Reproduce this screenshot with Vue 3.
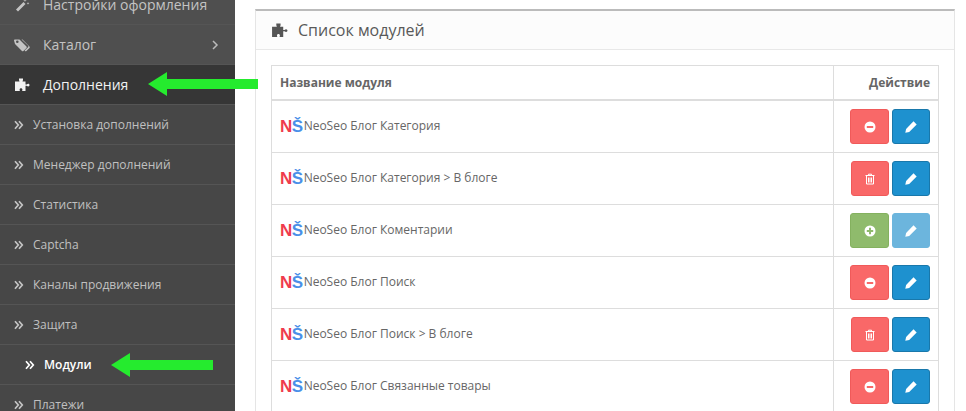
<script setup>
const puzzle = 'M5 1.5h4v1.600c0 .5-.5.8-.5 1.400h3v3h1.200c.5-.5 1-.7 1.500-.7.9 0 1.300.7 1.300 1.300s-.4 1.300-1.300 1.300c-.5 0-1-.2-1.500-.7h-1.200V14H8c.2-.5.4-.8.4-1.300 0-.8-.6-1.400-1.400-1.400s-1.400.6-1.400 1.400c0 .5.2.8.4 1.300H1V4.500h4.500C5.500 3.900 5 3.600 5 3.100z'
const sub = ['Установка дополнений', 'Менеджер дополнений', 'Статистика', 'Captcha', 'Каналы продвижения', 'Защита']
const rows = [
  { name: 'NeoSeo Блог Категория', kind: 'minus' },
  { name: 'NeoSeo Блог Категория > В блоге', kind: 'trash' },
  { name: 'NeoSeo Блог Коментарии', kind: 'plus' },
  { name: 'NeoSeo Блог Поиск', kind: 'minus' },
  { name: 'NeoSeo Блог Поиск > В блоге', kind: 'trash' },
  { name: 'NeoSeo Блог Связанные товары', kind: 'minus' },
]
</script>

<template>
  <div class="page">
    <aside class="side">
      <div class="item top">
        <svg class="ic" viewBox="0 0 16 16"><path d="M2 12.500 9.500 5l2 2L4 14.500zM11 1l.6 1.400L13 3l-1.400.6L11 5l-.6-1.400L9 3l1.400-.6zM14 5l.4 1 1 .4-1 .4-.4 1-.4-1-1-.4 1-.4z" fill="#c4c4c4"/></svg>
        <span>Настройки оформления</span>
      </div>
      <div class="item">
        <svg class="ic" viewBox="0 0 16 16">
          <path d="M0 3.500C0 3 .4 2.500 1 2.500h4.500L12.500 9.500c.4.400.4 1 0 1.400l-3.100 3.100c-.4.400-1 .4-1.400 0L1 7zM3.300 6a1.300 1.300 0 1 0 0-2.600 1.300 1.300 0 0 0 0 2.600z" fill="#c4c4c4" fill-rule="evenodd"/>
          <path d="M7.500 2.500h1L15.500 9.500c.4.400.4 1 0 1.400l-3.100 3.100c-.4.400-1 .4-1.400 0l-.4-.4 3.400-3.400c.5-.5.500-1.300 0-1.800z" fill="#c4c4c4"/>
        </svg>
        <span>Каталог</span>
        <svg class="chev" viewBox="0 0 8 12"><path d="M2 2l4 4-4 4" fill="none" stroke="#bbb" stroke-width="1.500"/></svg>
      </div>
      <div class="item active">
        <svg class="ic" viewBox="0 0 16 16"><path :d="puzzle" fill="#f2f2f2"/></svg>
        <span>Дополнения</span>
      </div>
      <div v-for="s in sub" :key="s" class="item subitem">
        <svg class="dbl" viewBox="0 0 10 10"><path d="M1 1.200l3.300 3.800L1 8.800M5 1.200l3.300 3.800L5 8.800" fill="none" stroke="#c4c4c4" stroke-width="1.700"/></svg>
        <span>{{ s }}</span>
      </div>
      <div class="item subitem deep">
        <svg class="dbl" viewBox="0 0 10 10"><path d="M1 1.200l3.300 3.800L1 8.800M5 1.200l3.300 3.800L5 8.800" fill="none" stroke="#fff" stroke-width="1.700"/></svg>
        <span>Модули</span>
      </div>
      <div class="item subitem">
        <svg class="dbl" viewBox="0 0 10 10"><path d="M1 1.200l3.300 3.800L1 8.800M5 1.200l3.300 3.800L5 8.800" fill="none" stroke="#c4c4c4" stroke-width="1.700"/></svg>
        <span>Платежи</span>
      </div>
    </aside>

    <main class="main">
      <section class="panel">
        <header class="head">
          <svg class="head-ic" viewBox="0 0 16 16"><path :d="puzzle" fill="#555"/></svg>
          <h3>Список модулей</h3>
        </header>
        <div class="body">
          <div class="table">
            <div class="tr th">
              <div class="c1">Название модуля</div>
              <div class="c2">Действие</div>
            </div>
            <div v-for="r in rows" :key="r.name" class="tr">
              <div class="c1 name">
                <span class="logo"><b class="n">N</b><b class="s">Š</b></span>
                <span class="label">{{ r.name }}</span>
              </div>
              <div class="c2 btns">
                <span class="btn" :class="r.kind === 'plus' ? 'green' : r.kind === 'trash' ? 'red narrow' : 'red'">
                  <svg v-if="r.kind === 'minus'" viewBox="0 0 12 12"><circle cx="6" cy="6" r="5.500" fill="#fff"/><rect x="2.800" y="5" width="6.400" height="2" fill="#f96868"/></svg>
                  <svg v-else-if="r.kind === 'plus'" viewBox="0 0 12 12"><circle cx="6" cy="6" r="5.500" fill="#fff"/><path d="M5 2.800h2V5h2.200v2H7v2.200H5V7H2.800V5H5z" fill="#8fbb6c"/></svg>
                  <svg v-else viewBox="0 0 12 12"><path d="M1.500 2.500h9M4.500 2.500V1.200h3v1.300M2.500 3v8h7V3M4.500 4.500v5M6 4.500v5M7.500 4.500v5" fill="none" stroke="#fff" stroke-width="1"/></svg>
                </span>
                <span class="btn blue" :class="{ faded: r.kind === 'plus' }">
                  <svg viewBox="0 0 12 12"><path d="M8.500.3l3.200 3.200-7.500 7.500-3.900.8.800-3.900z" fill="#fff"/></svg>
                </span>
              </div>
            </div>
          </div>
        </div>
      </section>
    </main>

    <svg class="arrow a1" width="111" height="26" viewBox="0 0 111 26"><path d="M0 13 19 1v7h91v10H19v7z" fill="#25eb2e"/></svg>
    <svg class="arrow a2" width="103" height="26" viewBox="0 0 103 26"><path d="M0 13 19 1v7h83v10H19v7z" fill="#25eb2e"/></svg>
  </div>
</template>

<style scoped>
.page {
  position: relative;
  display: flex;
  width: 966px;
  height: 411px;
  overflow: hidden;
  background: #fff;
  font-family: "Open Sans", sans-serif;
}
.side {
  flex: 0 0 235px;
  background: #474747;
  margin-top: -15px;
}
.item {
  display: flex;
  align-items: center;
  height: 39px;
  border-bottom: 1px solid #555;
  padding-left: 14px;
  color: #c3c3c3;
  font-size: 14px;
  background: #4f4f4f;
}
.item .ic {
  width: 16px;
  height: 16px;
  margin-right: 13px;
}
.chev {
  width: 8px;
  height: 12px;
  margin-left: auto;
  margin-right: 16px;
}
.active {
  background: #363636;
  color: #f2f2f2;
}
.subitem {
  background: #474747;
  font-size: 12px;
  color: #c0c0c0;
}
.dbl {
  width: 10px;
  height: 10px;
  margin-right: 9px;
}
.deep {
  padding-left: 25px;
  color: #fff;
  font-weight: 600;
}
.main {
  flex: 1;
  padding: 9px 11px 0 20px;
  min-width: 0;
}
.panel {
  border: 1px solid #e5e5e5;
  border-top: 2px solid #bbb;
  height: 420px;
}
.head {
  display: flex;
  align-items: center;
  height: 38px;
  padding-left: 15px;
  background: #fcfcfc;
  border-bottom: 1px solid #e8e8e8;
}
.head-ic {
  width: 17px;
  height: 17px;
  margin-right: 10px;
}
h3 {
  margin: 0;
  font-size: 16px;
  font-weight: 400;
  color: #595959;
}
.body {
  padding: 15px 15px 0;
}
.table {
  border: 1px solid #ddd;
  border-bottom: 0;
}
.tr {
  display: flex;
  height: 52px;
  border-bottom: 1px solid #ddd;
  box-sizing: border-box;
}
.th {
  height: 35px;
  border-bottom: 2px solid #ddd;
  font-size: 12px;
  font-weight: 700;
  color: #666;
}
.c1 {
  flex: 1;
  display: flex;
  align-items: center;
  padding-left: 8px;
}
.c2 {
  width: 105px;
  box-sizing: border-box;
  border-left: 1px solid #ddd;
  display: flex;
  align-items: center;
  justify-content: flex-end;
  padding-right: 8px;
}
.name {
  font-size: 12px;
  color: #666;
}
.label {
  margin-bottom: 2px;
}
.logo {
  display: inline-flex;
  font-family: "Liberation Sans", sans-serif;
  font-size: 17px;
  margin-right: 1px;
  letter-spacing: -.5px;
}
.logo .n {
  color: #ef3b4c;
}
.logo .s {
  color: #4a8fe8;
}
.btns {
  gap: 3px;
}
.btn {
  display: flex;
  align-items: center;
  justify-content: center;
  height: 35px;
  border-radius: 3px;
  box-sizing: border-box;
  border: 1px solid;
}
.btn svg {
  width: 12px;
  height: 12px;
}
.red {
  width: 39px;
  background: #f96868;
  border-color: #f05a5a;
}
.narrow {
  width: 38px;
}
.green {
  width: 39px;
  background: #8fbb6c;
  border-color: #84b15f;
}
.blue {
  width: 38px;
  background: #1e91cf;
  border-color: #1978ab;
}
.faded {
  background: #6cb5dd;
  border-color: #6cb5dd;
}
.arrow {
  position: absolute;
}
.a1 {
  left: 148px;
  top: 71px;
}
.a2 {
  left: 111px;
  top: 352px;
}
</style>
